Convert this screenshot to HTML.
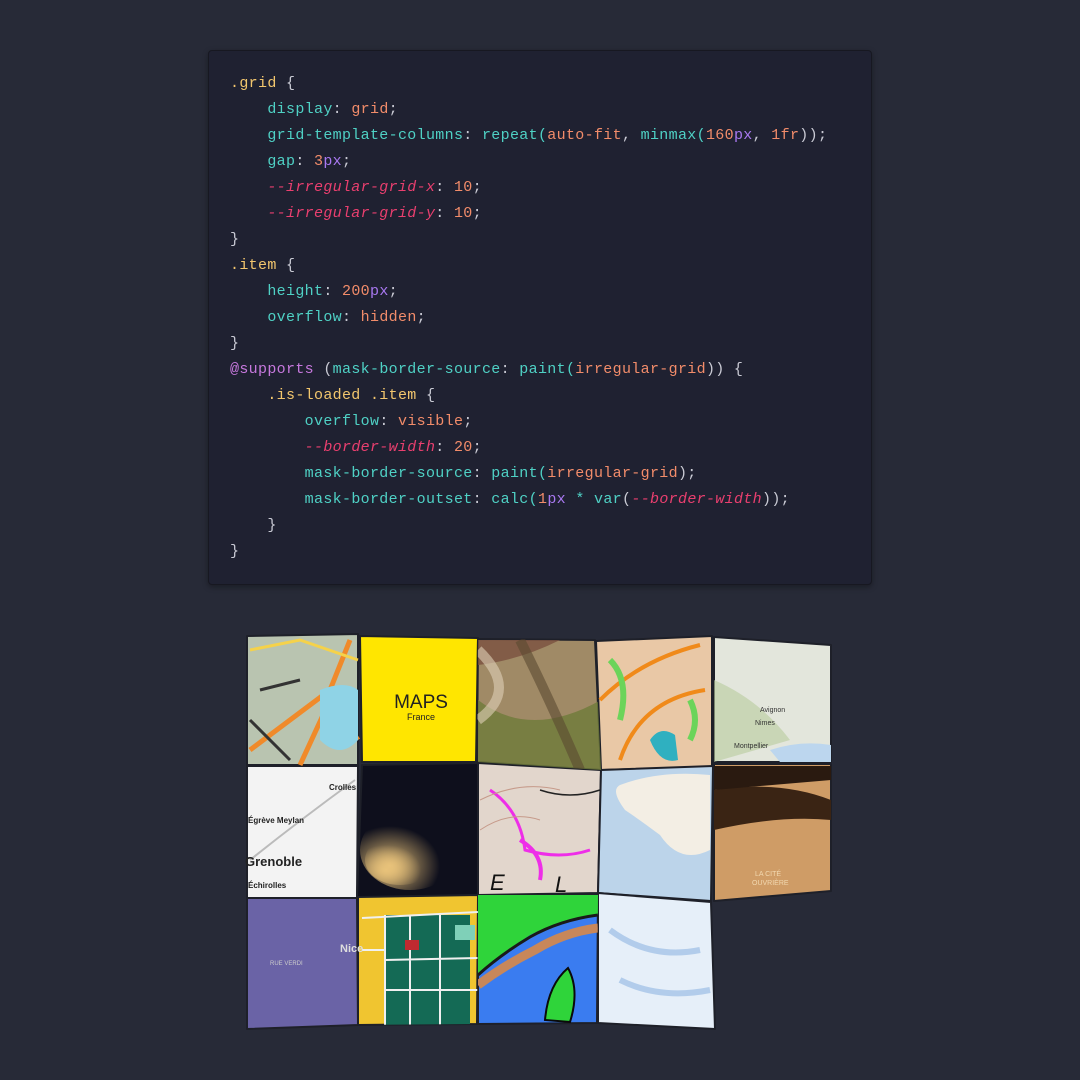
<!DOCTYPE html>
<html><head><meta charset="utf-8"><style>
html,body{margin:0;padding:0;background:#272a37;width:1080px;height:1080px;overflow:hidden}
.code{position:absolute;left:208px;top:50px;width:664px;height:535px;box-sizing:border-box;background:#1f2131;border:1px solid #171821;border-radius:4px;box-shadow:0 2px 6px rgba(0,0,0,.35);padding:20px 0 0 21px;font-family:"Liberation Mono",monospace;font-size:15px;letter-spacing:0.33px;line-height:26px;color:#c9cad4;white-space:pre}
.s{color:#f2c66d}.p{color:#4fd1c5}.v{color:#f28c6a}.u{color:#a878f0}.c{color:#ea3f6f;font-style:italic}.a{color:#c678dd}
svg{position:absolute;left:0;top:0}
</style></head><body>
<div class="code"><span class="s">.grid</span> {
    <span class="p">display</span>: <span class="v">grid</span>;
    <span class="p">grid-template-columns</span>: <span class="p">repeat(</span><span class="v">auto-fit</span>, <span class="p">minmax(</span><span class="v">160</span><span class="u">px</span>, <span class="v">1fr</span>));
    <span class="p">gap</span>: <span class="v">3</span><span class="u">px</span>;
    <span class="c">--irregular-grid-x</span>: <span class="v">10</span>;
    <span class="c">--irregular-grid-y</span>: <span class="v">10</span>;
}
<span class="s">.item</span> {
    <span class="p">height</span>: <span class="v">200</span><span class="u">px</span>;
    <span class="p">overflow</span>: <span class="v">hidden</span>;
}
<span class="a">@supports</span> (<span class="p">mask-border-source</span>: <span class="p">paint(</span><span class="v">irregular-grid</span>)) {
    <span class="s">.is-loaded .item</span> {
        <span class="p">overflow</span>: <span class="v">visible</span>;
        <span class="c">--border-width</span>: <span class="v">20</span>;
        <span class="p">mask-border-source</span>: <span class="p">paint(</span><span class="v">irregular-grid</span>);
        <span class="p">mask-border-outset</span>: <span class="p">calc(</span><span class="v">1</span><span class="u">px</span> <span class="p">*</span> <span class="p">var</span>(<span class="c">--border-width</span>));
    }
}</div>
<svg width="1080" height="1080" viewBox="0 0 1080 1080">
<defs>
<clipPath id="c12"><polygon points="358,897 478,895 477,1024 358,1025"/></clipPath>
<clipPath id="c13"><polygon points="478,895 598,895 597,1023 478,1024"/></clipPath>
<clipPath id="c7"><polygon points="362,765 478,763 478,895 357,898"/></clipPath>
<clipPath id="c3"><polygon points="478,639 595,640 601,770 477,762"/></clipPath>
<radialGradient id="gl" cx="0.3" cy="0.7" r="0.5"><stop offset="0" stop-color="#e8c27a"/><stop offset="1" stop-color="#e8c27a" stop-opacity="0"/></radialGradient>
</defs>
<g stroke="#1e2029" stroke-width="2" stroke-linejoin="round">
<polygon points="247,636 358,634 358,765 247,765" fill="#b9c4b0"/>
<polygon points="360,636 478,638 476,762 362,762" fill="#ffe600"/>
<polygon points="478,639 595,640 601,770 477,762" fill="#a08a66"/>
<polygon points="596,641 712,636 712,767 601,770" fill="#e9c8a6"/>
<polygon points="714,637 831,645 831,762 714,762" fill="#e3e6dc"/>
<polygon points="247,766 358,766 357,898 247,898" fill="#f3f3f3"/>
<polygon points="362,765 478,763 478,895 357,898" fill="#0e0f1c"/>
<polygon points="478,763 601,770 598,893 478,895" fill="#e2d6cc"/>
<polygon points="601,770 713,766 711,901 598,893" fill="#bcd4ea"/>
<polygon points="714,764 831,764 831,891 714,901" fill="#cf9c66"/>
<polygon points="247,898 357,898 358,1025 247,1029" fill="#6a63a6"/>
<polygon points="358,897 478,895 477,1024 358,1025" fill="#f0c530"/>
<polygon points="478,895 598,895 597,1023 478,1024" fill="#3a7cf0"/>
<polygon points="598,893 711,902 715,1029 598,1023" fill="#e6eff9"/>
</g>
<g fill="none">
<path d="M250,750 L330,690 L350,640 M300,765 L330,700 L358,740" stroke="#f08a2a" stroke-width="5"/>
<path d="M320,690 Q345,680 358,690 L358,740 Q340,760 320,740 Z" fill="#8fd3e6"/>
<path d="M250,650 L300,640 L358,660" stroke="#f5d24a" stroke-width="3"/>
<path d="M250,720 L290,760 M260,690 L300,680" stroke="#333" stroke-width="3"/>
<path d="M600,700 Q640,660 700,645 M620,760 Q640,700 705,690" stroke="#f08a1a" stroke-width="4"/>
<path d="M610,660 Q630,680 620,720 M690,700 Q700,720 690,740" stroke="#6cd45a" stroke-width="6"/>
<path d="M650,740 Q660,725 675,735 L678,760 Q660,765 650,740Z" fill="#2fb0c0"/>
<g clip-path="url(#c3)">
<path d="M478,700 Q530,740 601,700 L601,770 L478,770Z" fill="#6e7a3a" opacity=".8"/>
<path d="M478,640 L560,640 Q520,660 478,665Z" fill="#7a5040" opacity=".8"/>
<path d="M520,640 Q550,700 580,770" stroke="#5a4a30" stroke-width="10" opacity=".6"/>
<path d="M478,650 Q520,690 478,720" stroke="#e0d0b8" stroke-width="10" opacity=".6"/>
</g>
<path d="M714,680 Q760,700 790,740 L714,762Z" fill="#b8cc9c" opacity=".6"/>
<path d="M770,750 Q800,740 831,745 L831,762 L780,762Z" fill="#bcd6ee"/>
<path d="M620,785 Q660,770 710,775 L710,850 Q680,865 660,835 Q640,820 625,810 Q610,790 620,785Z" fill="#f3eee4"/>
<path d="M714,790 Q780,780 831,800 L831,820 Q780,815 714,830Z" fill="#3a2414"/>
<path d="M714,766 L831,766 L831,780 L714,790Z" fill="#2a1a10"/>
<g clip-path="url(#c7)">
<ellipse cx="410" cy="850" rx="50" ry="40" fill="url(#gl)"/>
<ellipse cx="400" cy="860" rx="35" ry="25" fill="url(#gl)"/>
</g>
<g clip-path="url(#c12)">
<rect x="385" y="915" width="85" height="110" fill="#146a55"/>
<path d="M362,918 L478,912 M385,915 L385,1025 M410,915 L410,1025 M440,915 L440,1025 M385,960 L478,958 M385,990 L478,990 M362,950 L385,950" stroke="#f0f0f0" stroke-width="2"/>
<rect x="405" y="940" width="14" height="10" fill="#c02a30"/>
<rect x="455" y="925" width="20" height="15" fill="#7fd0b8"/>
</g>
<g clip-path="url(#c13)">
<path d="M478,895 L598,895 L598,915 Q560,920 530,935 Q500,955 478,975Z" fill="#2fd43a"/>
<path d="M478,975 Q500,955 530,937 Q560,920 598,915" stroke="#1a1a1a" stroke-width="3"/>
<path d="M478,985 Q505,965 535,950 Q565,932 598,928" stroke="#c8875a" stroke-width="9"/>
<path d="M545,1020 Q548,985 568,968 Q580,990 570,1022Z" fill="#2fd43a" stroke="#0a0a0a" stroke-width="2"/>
</g>
<path d="M490,790 Q520,810 525,850 Q560,860 590,850" stroke="#ee2ee8" stroke-width="3"/>
<path d="M520,840 Q545,855 540,880" stroke="#ee2ee8" stroke-width="4"/>
<path d="M480,800 Q520,780 560,790 M480,830 Q510,810 540,820" stroke="#c69a8a" stroke-width="1"/>
<path d="M540,790 Q570,800 600,790" stroke="#222" stroke-width="1.5"/>
<path d="M250,860 Q300,820 355,780" stroke="#bbbbbb" stroke-width="2"/>
<path d="M610,930 Q650,960 700,950 M620,980 Q660,1000 710,990" stroke="#9bbde6" stroke-width="6" opacity=".7"/>
</g>
<g font-family="Liberation Sans,sans-serif">
<text x="421" y="708" font-size="19" text-anchor="middle" fill="#222">MAPS</text>
<text x="421" y="720" font-size="9" text-anchor="middle" fill="#222">France</text>
<text x="329" y="790" font-size="8" font-weight="bold" fill="#222">Crolles</text>
<text x="248" y="823" font-size="8" font-weight="bold" fill="#222">Égrève   Meylan</text>
<text x="245" y="866" font-size="13" font-weight="bold" fill="#222">Grenoble</text>
<text x="248" y="888" font-size="8" font-weight="bold" fill="#222">Échirolles</text>
<text x="340" y="952" font-size="11" font-weight="bold" fill="#ddd">Nice</text>
<text x="270" y="965" font-size="6" fill="#ccc">RUE VERDI</text>
<text x="490" y="890" font-size="22" font-style="italic" fill="#111">E</text>
<text x="555" y="892" font-size="22" font-style="italic" fill="#111">L</text>
<text x="760" y="712" font-size="7" fill="#333">Avignon</text>
<text x="755" y="725" font-size="7" fill="#333">Nimes</text>
<text x="734" y="748" font-size="7" fill="#333">Montpellier</text>
<text x="755" y="876" font-size="7" fill="#f2d8b0">LA CITÉ</text>
<text x="752" y="885" font-size="7" fill="#f2d8b0">OUVRIÈRE</text>
</g>
</svg>
</body></html>
